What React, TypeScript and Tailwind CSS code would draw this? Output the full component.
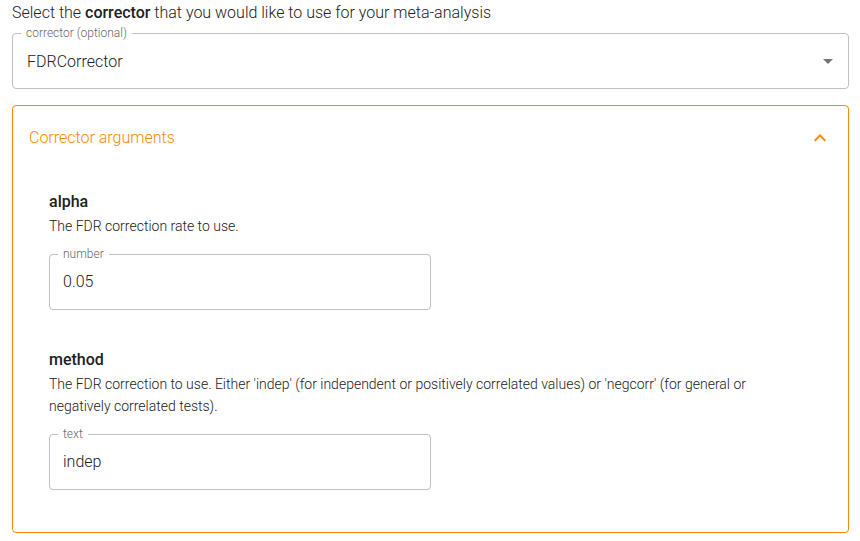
import { useState } from "react";
import type { InputHTMLAttributes } from "react";

function OutlinedInput({ id, label, ...rest }: { id: string; label: string } & InputHTMLAttributes<HTMLInputElement>) {
  return (
    <fieldset className="h-16 w-1/2 rounded border border-[#c0c0c0] pl-2">
      <legend className="flex h-4 items-center px-[5px] text-xs text-[#666666]">
        <label htmlFor={id}>{label}</label>
      </legend>
      <input id={id} className="h-[38px] w-full bg-transparent pl-[5px] text-base text-[#212121] outline-none" {...rest} />
    </fieldset>
  );
}

export default function App() {
  const [open, setOpen] = useState(true);
  return (
    <main className="bg-white pt-px pr-[11px] pb-2 pl-3 font-['Roboto',sans-serif] font-light text-[#212121]">
      <p className="text-base leading-6">
        Select the <b className="font-medium">corrector</b> that you would like to use for your meta-analysis
      </p>
      <fieldset className="relative h-16 rounded border border-[#c0c0c0] pl-2">
        <legend className="flex h-4 items-center px-[5px] text-xs text-[#666666]">
          <label htmlFor="corrector">corrector (optional)</label>
        </legend>
        <select id="corrector" className="h-[42px] w-full appearance-none bg-transparent pl-[6px] text-base outline-none">
          <option>FDRCorrector</option>
        </select>
        <svg viewBox="0 0 24 24" className="pointer-events-none absolute right-2 bottom-[15px] size-6 fill-[#757575]" aria-hidden="true">
          <path d="M7 10l5 5 5-5z" />
        </svg>
      </fieldset>
      <section className="mt-4 rounded border border-[#f78900] pb-[42px]">
        <button
          type="button"
          aria-expanded={open}
          onClick={() => setOpen(!open)}
          className="flex h-16 w-full items-center justify-between px-4 text-base text-[#f78900]"
        >
          Corrector arguments
          <svg viewBox="0 0 24 24" className="size-6 fill-[#f78900]" aria-hidden="true">
            <path d="M12 8l-6 6 1.41 1.41L12 10.83l4.59 4.58L18 14z" />
          </svg>
        </button>
        {open && (
          <div className="px-9 pt-[19px]">
            <h2 className="text-base leading-[26px] font-medium">alpha</h2>
            <p className="mb-[9px] pr-8 text-sm leading-[22px]">The FDR correction rate to use.</p>
            <OutlinedInput id="alpha" label="number" defaultValue="0.05" inputMode="decimal" />
            <h2 className="mt-[37px] text-base leading-[26px] font-medium">method</h2>
            <p className="mb-[9px] pr-8 text-sm leading-[22px]">
              The FDR correction to use. Either 'indep' (for independent or positively correlated values) or 'negcorr' (for general or negatively correlated tests).
            </p>
            <OutlinedInput id="method" label="text" defaultValue="indep" />
          </div>
        )}
      </section>
    </main>
  );
}
